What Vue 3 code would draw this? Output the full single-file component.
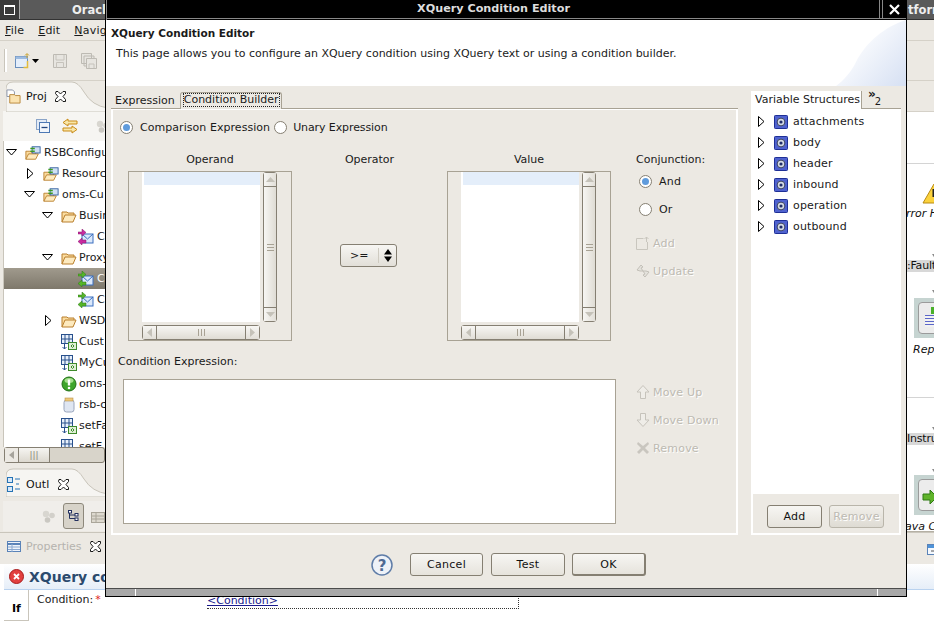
<script setup>
const menus = [['F', 'ile'], ['E', 'dit'], ['N', 'aviga']]
const tree = [
  { t: 'RSBConfigu', d: 0, a: 'open', i: 'proj' },
  { t: 'Resourc', d: 1, a: 'closed', i: 'proj' },
  { t: 'oms-Cu', d: 1, a: 'open', i: 'proj' },
  { t: 'Busin', d: 2, a: 'open', i: 'folder' },
  { t: 'C', d: 3, i: 'biz' },
  { t: 'Proxy', d: 2, a: 'open', i: 'folder' },
  { t: 'C', d: 3, i: 'proxy', sel: true },
  { t: 'C', d: 3, i: 'proxy' },
  { t: 'WSD', d: 2, a: 'closed', i: 'folder' },
  { t: 'Cust', d: 2, i: 'xf' },
  { t: 'MyCu', d: 2, i: 'xf' },
  { t: 'oms-', d: 2, i: 'ok' },
  { t: 'rsb-c', d: 2, i: 'jar' },
  { t: 'setFa', d: 2, i: 'xf' },
  { t: 'setF', d: 2, i: 'xf' }
]
const vars = ['attachments', 'body', 'header', 'inbound', 'operation', 'outbound']
</script>

<template>
  <div class="desk">
    <svg class="defs" width="0" height="0">
      <defs>
        <symbol id="folder" viewBox="0 0 16 16">
          <path d="M1 14V4h5l1 1h6v2" fill="#fbdc9f" stroke="#b97f2c"/>
          <path d="M1 14l3-7h11l-3 7z" fill="#fdeabf" stroke="#b97f2c"/>
        </symbol>
        <symbol id="proj" viewBox="0 0 18 16">
          <path d="M1 15V6h5l1 1h5v2" fill="#fbdc9f" stroke="#b97f2c"/>
          <path d="M1 15l3-6h11l-3 6z" fill="#fdeabf" stroke="#b97f2c"/>
          <rect x="8" y="1" width="9" height="7" fill="#cfe0f4" stroke="#2f5d9e"/>
          <path d="M6 3h5M6 6h5" stroke="#3c9a22" stroke-width="1.6"/>
        </symbol>
        <symbol id="proxy" viewBox="0 0 16 16">
          <rect x="4" y="5" width="11" height="9" fill="#dbe8fa" stroke="#3a6fbf"/>
          <path d="M4 5l5.500 5L15 5" fill="none" stroke="#3a6fbf"/>
          <path d="M0 3h4V0l4 3.500L4 7V5H0z" fill="#55b42a" stroke="#2e7a12" stroke-width=".5"/>
          <path d="M8 11H4V9l-4 3.500L4 16v-2h4z" fill="#55b42a" stroke="#2e7a12" stroke-width=".5"/>
        </symbol>
        <symbol id="biz" viewBox="0 0 16 16">
          <rect x="4" y="5" width="11" height="9" fill="#dbe8fa" stroke="#3a6fbf"/>
          <path d="M4 5l5.500 5L15 5" fill="none" stroke="#3a6fbf"/>
          <path d="M0 3h4V0l4 3.500L4 7V5H0z" fill="#c92ba0" stroke="#861a6a" stroke-width=".5"/>
          <path d="M8 11H4V9l-4 3.500L4 16v-2h4z" fill="#c92ba0" stroke="#861a6a" stroke-width=".5"/>
        </symbol>
        <symbol id="xf" viewBox="0 0 16 16">
          <rect x=".5" y=".5" width="11" height="9" fill="#e8f0fb" stroke="#28508c"/>
          <path d="M4 1v8M8 1v8M1 5h10" stroke="#28508c"/>
          <rect x="7.500" y="8.500" width="8" height="7" fill="#dff0d6" stroke="#3f8a2c"/>
          <path d="M10 12l1.500-1.500L13 12l-1.500 1.500z" fill="none" stroke="#3f8a2c"/>
          <path d="M3.500 10v5M1.500 13l2 2 2-2" fill="none" stroke="#28508c"/>
        </symbol>
        <symbol id="ok" viewBox="0 0 16 16">
          <circle cx="8" cy="8" r="7" fill="#3ea52b" stroke="#1f6e14"/>
          <ellipse cx="8" cy="4.500" rx="4.500" ry="2.500" fill="#a6e08e"/>
          <path d="M8 3.500v6" stroke="#fff" stroke-width="2.400"/>
          <circle cx="8" cy="12" r="1.300" fill="#fff"/>
        </symbol>
        <symbol id="jar" viewBox="0 0 16 16">
          <rect x="3" y="3" width="10" height="12" rx="2.500" fill="#dfe6f2" stroke="#9aa6bd"/>
          <rect x="4" y="1" width="8" height="3" fill="#eec97a" stroke="#b8914a" stroke-width=".6"/>
        </symbol>
        <symbol id="var" viewBox="0 0 14 14">
          <rect x=".5" y=".5" width="13" height="13" rx=".8" fill="#4f62cf" stroke="#1e2f96"/>
          <circle cx="7" cy="7" r="3.900" fill="#d5dbe6" stroke="#39415e"/>
          <circle cx="7" cy="7" r="1.600" fill="#1f2c6a"/>
        </symbol>
        <symbol id="closex" viewBox="0 0 11 11">
          <path d="M1 .5h2L5.500 3 8 .5h2.500v2L8 5.500l2.500 3v2H8L5.500 8 3 10.500H.5v-2L3 5.500.5 2.500z" fill="#fff" stroke="#000" stroke-width=".9"/>
        </symbol>
        <symbol id="balls" viewBox="0 0 13 13">
          <circle cx="4" cy="4" r="3.200" fill="#d8d6d0"/>
          <circle cx="10" cy="5.500" r="2.800" fill="#d2d0ca"/>
          <circle cx="5.500" cy="10" r="2.800" fill="#cac8c2"/>
        </symbol>
        <linearGradient id="swoosh" x1=".15" y1=".3" x2="1" y2="1">
          <stop offset="0" stop-color="#fff"/>
          <stop offset="1" stop-color="#d6e0f3"/>
        </linearGradient>
      </defs>
    </svg>

    <!-- window behind the dialog -->
    <div class="win">
      <div class="titlebar">
        <div class="winbtn"><span class="winsq"></span></div>
        <span class="wintitle">Oracl</span>
        <span class="wintitle2">tforn</span>
      </div>
      <div class="menubar">
        <span v-for="m in menus" :key="m[0]" class="menu"><u>{{ m[0] }}</u>{{ m[1] }}</span>
      </div>
      <div class="toolbar">
        <span class="grip"></span>
        <svg class="tb-new" width="16" height="16" viewBox="0 0 16 16">
          <rect x=".5" y="3.500" width="12" height="11" fill="#e4eefb" stroke="#6a8fbd"/>
          <rect x=".5" y="3.500" width="12" height="2.500" fill="#9dbbe0"/>
          <path d="M12.500 8v6.500h-4" fill="none" stroke="#e2bd3e" stroke-width="1.500"/>
          <path d="M12 5V1M10 2.500L12 .5l2 2" fill="none" stroke="#c9a22c"/>
        </svg>
        <svg class="tb-arrow" width="7" height="4"><path d="M0 0h7L3.500 4z" fill="#000"/></svg>
        <svg class="tb-save" width="16" height="16" viewBox="0 0 16 16">
          <path d="M1.500 1.500h13v13h-13z" fill="#e7e5e0" stroke="#bdbab3"/>
          <path d="M4 2v5h8V2M4.500 14.500v-5h7v5" fill="none" stroke="#c6c3bc"/>
        </svg>
        <svg class="tb-saveall" width="16" height="16" viewBox="0 0 16 16">
          <path d="M.5.500h10v10H.5zM3 3h10v10H3z" fill="#e7e5e0" stroke="#bdbab3"/>
          <path d="M5.500 5.500h10v10h-10z" fill="#e7e5e0" stroke="#bdbab3"/>
          <path d="M8 15v-4h5v4" fill="none" stroke="#c6c3bc"/>
        </svg>
      </div>

      <div class="work">
        <div class="leftcol">
          <section class="pane projpane">
            <div class="tabhead">
              <svg class="tabshape" width="102" height="31" viewBox="0 0 102 31">
                <path d="M0 31V8q0-7 7-7h59q6 0 12 10 8 14 24 16v4z" fill="#f6f5f2" stroke="#c9c5bb"/>
              </svg>
              <svg class="tabicon" width="15" height="15" viewBox="0 0 16 16">
                <path d="M1 1h6l2 2v5H1z" fill="#fff" stroke="#8a93a6"/>
                <path d="M4 15V6h5l1 1h5v8z" fill="#fbe3b0" stroke="#b8863a"/>
              </svg>
              <span class="tabtxt">Proj</span>
              <svg class="tabx" width="11" height="11"><use href="#closex"/></svg>
            </div>
            <div class="viewbar">
              <svg class="vb1" width="14" height="14" viewBox="0 0 14 14">
                <rect x=".5" y=".5" width="10" height="10" fill="#e3ebf6" stroke="#8aa4c8"/>
                <rect x="3.500" y="3.500" width="10" height="10" fill="#f2f6fb" stroke="#4c78b4"/>
                <path d="M5.500 8.500h6" stroke="#23467f" stroke-width="1.300"/>
              </svg>
              <svg class="vb2" width="16" height="16" viewBox="0 0 16 16">
                <path d="M6 1L1 4.500 6 8V6h9V3H6zM10 8l5 3.500-5 3.500v-2H1v-3h9z" fill="#f9e7a8" stroke="#c98b18"/>
              </svg>
              <span class="vbsep"></span>
              <svg class="vbgray" width="13" height="13"><use href="#balls"/></svg>
            </div>
            <div class="treebox">
              <div v-for="(r, idx) in tree" :key="idx" class="trow" :class="['d' + r.d, { sel: r.sel }]">
                <svg v-if="r.a === 'open'" class="tw" width="11" height="7"><path d="M.5.500h10L5.500 6z" fill="#fff" stroke="#000"/></svg>
                <svg v-else-if="r.a === 'closed'" class="tw" width="7" height="11"><path d="M.5.500v10L6 5.500z" fill="#fff" stroke="#000"/></svg>
                <span v-else class="tw"></span>
                <svg class="ticon" width="16" height="16"><use :href="'#' + r.i"/></svg>
                <span class="ttxt">{{ r.t }}</span>
              </div>
            </div>
            <div class="hscroll">
              <span class="hs-arrow"><svg width="5" height="8"><path d="M5 0v8L0 4z" fill="#a7a49c"/></svg></span>
              <span class="hs-thumb">|||</span>
            </div>
          </section>
          <section class="pane outline">
            <div class="tabhead short">
              <svg class="tabshape" width="102" height="29" viewBox="0 0 102 29">
                <path d="M0 29V8q0-7 7-7h59q6 0 12 10 8 13 24 15v3z" fill="#f6f5f2" stroke="#c9c5bb"/>
              </svg>
              <svg class="tabicon ol" width="14" height="15" viewBox="0 0 14 15">
                <rect x=".5" y=".5" width="5" height="5" fill="#d7e7f8" stroke="#2573b5"/>
                <rect x=".5" y="9.500" width="5" height="5" fill="#d7e7f8" stroke="#2573b5"/>
                <path d="M8 2h5M8 12h5M9 7h3" stroke="#2573b5" stroke-width="1.200"/>
              </svg>
              <span class="tabtxt">Outl</span>
              <svg class="tabx outx" width="11" height="11"><use href="#closex"/></svg>
            </div>
            <div class="olbar">
              <svg class="olgray" width="13" height="13"><use href="#balls"/></svg>
              <span class="olbtn">
                <svg width="11" height="12" viewBox="0 0 11 12"><path d="M1.500 2v6.500h6M1.500 5h6" fill="none" stroke="#23305f"/><rect x=".5" y=".5" width="3" height="2.500" fill="#fff" stroke="#23305f"/><rect x="7" y="3.500" width="3" height="2.500" fill="#fff" stroke="#23305f"/><rect x="7" y="8" width="3" height="2.500" fill="#fff" stroke="#23305f"/></svg>
              </span>
              <svg class="oltable" width="14" height="14" viewBox="0 0 14 14"><rect x=".5" y="3.500" width="13" height="10" fill="#ddd9cf" stroke="#aaa69a"/><path d="M1 7h13M1 10h13M5 4v10" stroke="#aaa69a"/></svg>
            </div>
          </section>
        </div>
        <div class="gap"></div>
        <div class="rightcol">
          <div class="rc-band"></div>
          <div class="canvas">
            <svg class="warnico" width="24" height="22" viewBox="0 0 24 22"><path d="M12 1L1 20h22z" fill="#fbd23c" stroke="#b88a14"/><path d="M12 6v8" stroke="#222" stroke-width="3"/></svg>
            <span class="cnote errh">rror H</span>
            <span class="canvas-line l1"></span>
            <span class="arrowd a1"></span>
            <span class="pill p1">:Fault</span>
            <span class="arrowd a2"></span>
            <div class="node n1">
              <div class="nodein">
                <span class="nflag"></span>
                <span class="nlines"></span>
              </div>
            </div>
            <span class="cnote rep">Rep.</span>
            <span class="canvas-line l2"></span>
            <span class="arrowd a3"></span>
            <span class="pill p2">Instru</span>
            <span class="arrowd a4"></span>
            <div class="node n2">
              <div class="nodein">
                <svg class="narrow" width="16" height="14" viewBox="0 0 16 14"><path d="M1 4h7V0l7 7-7 7v-4H1z" fill="#5fb32a" stroke="#2e7a12"/></svg>
              </div>
            </div>
            <span class="cnote jav">ava C</span>
          </div>
        </div>
      </div>

      <section class="props">
        <div class="proptab">
          <svg class="ptico" width="14" height="11" viewBox="0 0 14 11"><rect x=".5" y=".5" width="13" height="10" fill="#eef3fa" stroke="#5a83b8"/><path d="M1 3h12" stroke="#5a83b8" stroke-width="2"/><path d="M1 6h12M1 8.500h12M5 3v8" stroke="#8aa8cf"/></svg>
          <span class="pttxt">Properties</span>
          <svg class="tabx propx" width="11" height="11"><use href="#closex"/></svg>
          <svg class="rightmini" width="13" height="11" viewBox="0 0 13 11"><rect x=".5" y=".5" width="12" height="10" fill="#f4f8fd" stroke="#5a83b8"/><path d="M1 2.500h11" stroke="#4f93d8" stroke-width="3"/><path d="M4 7h5" stroke="#555"/></svg>
        </div>
        <div class="band">
          <svg class="errico" width="15" height="15" viewBox="0 0 15 15"><circle cx="7.500" cy="7.500" r="7" fill="#e2403f" stroke="#a81c1c"/><path d="M5 5l5 5M10 5l-5 5" stroke="#fff" stroke-width="1.800"/></svg>
          <span class="bandtxt">XQuery con</span>
        </div>
        <div class="propbody">
          <div class="iftab">If</div>
          <div class="condlab">Condition:<b>*</b></div>
          <div class="condfield"><span class="condlink">&lt;Condition&gt;</span></div>
        </div>
      </section>
    </div>

    <!-- modal dialog -->
    <div class="dlg">
      <div class="dlgtitle">
        <span class="dlgname">XQuery Condition Editor</span>
        <span class="dlgclose">
          <svg width="11" height="11" viewBox="0 0 11 11"><path d="M1 1l9 9M10 1l-9 9" stroke="#fff" stroke-width="2.200"/></svg>
        </span>
      </div>
      <div class="dlghead">
        <svg class="swoosh" width="70" height="66" viewBox="0 0 70 66"><path d="M70 0C50 6 30 22 20 42 15 52 8 60 0 66h70z" fill="url(#swoosh)"/></svg>
        <div class="h1">XQuery Condition Editor</div>
        <div class="h2">This page allows you to configure an XQuery condition using XQuery text or using a condition builder.</div>
      </div>
      <div class="dlgbody">
        <div class="main">
          <div class="tabs">
            <span class="tab">Expression</span>
            <span class="tab active"><span class="focus">Condition Builder</span></span>
          </div>
          <div class="panel">
            <div class="radios">
              <span class="radio on"></span><span class="rl1">Comparison Expression</span>
              <span class="radio"></span><span class="rl2">Unary Expression</span>
            </div>
            <div class="row2">
              <div class="col">
                <div class="collab">Operand</div>
                <div class="listbox">
                  <div class="list"><div class="selrow"></div></div>
                  <div class="vbar">
                    <span class="vb-btn"><svg width="9" height="5"><path d="M0 5h9L4.500 0z" fill="#c5c2b9"/></svg></span>
                    <span class="vb-thumb"><i></i><i></i><i></i></span>
                    <span class="vb-btn"><svg width="9" height="5"><path d="M0 0h9L4.500 5z" fill="#c5c2b9"/></svg></span>
                  </div>
                  <div class="hbar">
                    <span class="hb-btn"><svg width="5" height="9"><path d="M5 0v9L0 4.500z" fill="#c5c2b9"/></svg></span>
                    <span class="hb-thumb"><i></i><i></i><i></i></span>
                    <span class="hb-btn"><svg width="5" height="9"><path d="M0 0v9l5-4.500z" fill="#c5c2b9"/></svg></span>
                  </div>
                </div>
              </div>
              <div class="opcol">
                <div class="collab">Operator</div>
                <div class="opwrap">
                  <div class="select">
                    <span class="seltxt">&gt;=</span>
                    <span class="selsep"></span>
                    <svg width="8" height="13" viewBox="0 0 8 13"><path d="M0 5.500h8L4 0zM0 7.500h8L4 13z" fill="#000"/></svg>
                  </div>
                </div>
              </div>
              <div class="col">
                <div class="collab">Value</div>
                <div class="listbox">
                  <div class="list"><div class="selrow"></div></div>
                  <div class="vbar">
                    <span class="vb-btn"><svg width="9" height="5"><path d="M0 5h9L4.500 0z" fill="#c5c2b9"/></svg></span>
                    <span class="vb-thumb"><i></i><i></i><i></i></span>
                    <span class="vb-btn"><svg width="9" height="5"><path d="M0 0h9L4.500 5z" fill="#c5c2b9"/></svg></span>
                  </div>
                  <div class="hbar">
                    <span class="hb-btn"><svg width="5" height="9"><path d="M5 0v9L0 4.500z" fill="#c5c2b9"/></svg></span>
                    <span class="hb-thumb"><i></i><i></i><i></i></span>
                    <span class="hb-btn"><svg width="5" height="9"><path d="M0 0v9l5-4.500z" fill="#c5c2b9"/></svg></span>
                  </div>
                </div>
              </div>
              <div class="conj">
                <div class="conjlab">Conjunction:</div>
                <div class="act"><span class="radio on"></span><span class="conjopt">And</span></div>
                <div class="act"><span class="radio"></span><span class="conjopt">Or</span></div>
                <div class="act dis first">
                  <svg width="14" height="14" viewBox="0 0 14 14"><path d="M.5 2.500h7M.5 2.500v11h11V6" fill="none" stroke="#c9c6be"/><path d="M10.500 6V1M8.500 3l2-2 2 2" fill="none" stroke="#c9c6be"/></svg>
                  <span>Add</span>
                </div>
                <div class="act dis">
                  <svg width="14" height="14" viewBox="0 0 14 14"><path d="M1 6l4-5 2 2-2 1 2 3-3 0zM13 8l-4 5-2-2 2-1-2-3 3 0z" fill="#e4e2dc" stroke="#c3c0b8"/></svg>
                  <span>Update</span>
                </div>
              </div>
            </div>
            <div class="celab">Condition Expression:</div>
            <div class="row3">
              <div class="textarea"></div>
              <div class="mv">
                <div class="act dis">
                  <svg width="14" height="14" viewBox="0 0 14 14"><path d="M7 .5L13 7H9.500v6.500h-5V7H1z" fill="#efede8" stroke="#c6c3bb"/></svg>
                  <span>Move Up</span>
                </div>
                <div class="act dis">
                  <svg width="14" height="14" viewBox="0 0 14 14"><path d="M7 13.500L13 7H9.500V.5h-5V7H1z" fill="#efede8" stroke="#c6c3bb"/></svg>
                  <span>Move Down</span>
                </div>
                <div class="act dis">
                  <svg width="14" height="14" viewBox="0 0 14 14"><path d="M2 1l5 4 5-4 1 2-4 4 4 4-2 2-4-4-4 4-2-2 4-4-4-4z" fill="#c9c6bf"/></svg>
                  <span>Remove</span>
                </div>
              </div>
            </div>
          </div>
        </div>
        <div class="side">
          <div class="sidetabs">
            <span class="vtab">Variable Structures</span>
            <span class="more">»<sub>2</sub></span>
          </div>
          <div class="sidebody">
            <div class="vartree">
              <div v-for="v in vars" :key="v" class="vrow">
                <svg width="7" height="11"><path d="M.5.500v10L6 5.500z" fill="#fff" stroke="#000"/></svg>
                <svg class="vic" width="14" height="14"><use href="#var"/></svg>
                <span>{{ v }}</span>
              </div>
            </div>
            <div class="sidebtns">
              <button class="btn small">Add</button>
              <button class="btn small off">Remove</button>
            </div>
          </div>
        </div>
      </div>
      <div class="dlgfoot">
        <svg class="help" width="22" height="22" viewBox="0 0 22 22">
          <circle cx="11" cy="11" r="10" fill="#eef2f8" stroke="#5f7da8" stroke-width="1.500"/>
          <text x="11" y="16.500" text-anchor="middle" class="qm">?</text>
        </svg>
        <button class="btn fb">Cancel</button>
        <button class="btn fb">Test</button>
        <button class="btn fb def">OK</button>
      </div>
      <div class="status"><i></i><i class="n2b"></i></div>
    </div>
  </div>
</template>

<style>
html, body { margin: 0; padding: 0; background: #fff; }
</style>

<style scoped>
.desk {
  position: relative;
  width: 934px;
  height: 622px;
  overflow: hidden;
  background: #fff;
  font-family: "DejaVu Sans", sans-serif;
  font-size: 11px;
  color: #1a1a1a;
}
.defs { position: absolute; }
svg { display: block; flex: none; }

/* background window */
.win { width: 934px; height: 622px; display: flex; flex-direction: column; background: #ece9e3; }
.titlebar { height: 19px; flex: none; background: #5a5a5a; display: flex; align-items: center; color: #eee; font-weight: bold; font-size: 12px; border-bottom: 1px solid #333; overflow: hidden; }
.winbtn { width: 20px; height: 19px; flex: none; border-right: 1px solid #aaa; box-sizing: border-box; display: flex; align-items: center; justify-content: center; margin-right: 52px; background: #3a3a3a; }
.winsq { width: 9px; height: 7px; border: 1px solid #fff; border-top-width: 2px; }
.wintitle { width: 836px; flex: none; font-size: 11.500px; }
.wintitle2 { flex: none; font-size: 11.500px; }
.menubar { height: 21px; flex: none; display: flex; align-items: center; padding-left: 5px; gap: 14px; border-bottom: 1px solid #d5d1c8; box-sizing: border-box; }
.menu { letter-spacing: .2px; }
.toolbar { height: 40px; flex: none; display: flex; align-items: center; padding-left: 4px; box-sizing: border-box; border-bottom: 1px solid #d5d1c8; }
.grip { width: 2px; height: 23px; background: #fff; border-left: 1px solid #c9c5bb; margin-right: 8px; }
.tb-arrow { margin: 0 0 0 1px; }
.tb-save { margin-left: 13px; }
.tb-saveall { margin-left: 13px; }

.work { height: 451px; flex: none; display: flex; }
.leftcol { width: 105px; flex: none; display: flex; flex-direction: column; }
.gap { flex: 1; }
.rightcol { width: 27px; flex: none; display: flex; flex-direction: column; background: #fff; }
.rc-band { height: 30px; flex: none; background: #ece9e3; border-bottom: 1px solid #d5d1c8; }
.canvas { position: relative; flex: 1; background: #fff; border-bottom: 1px solid #b5b0a4; overflow: hidden; }
.canvas-line { position: absolute; left: 0; right: 0; height: 1px; background: #d4d4d4; }
.l1 { top: 51px; }
.l2 { top: 285px; }
.warnico { position: absolute; left: 15px; top: 71px; }
.cnote { position: absolute; font-style: italic; font-size: 11px; color: #111; white-space: nowrap; }
.errh { left: -1px; top: 95px; }
.rep { left: 6px; top: 231px; }
.jav { left: -2px; top: 408px; }
.pill { position: absolute; left: 0; right: 0; height: 12px; line-height: 12px; background: #d8d8d8; color: #111; white-space: nowrap; letter-spacing: -.2px; }
.p1 { top: 148px; }
.p2 { top: 321px; }
.arrowd { position: absolute; left: 25px; width: 0; height: 0; border: 3px solid transparent; border-top: 5px solid #8b8b8b; border-bottom: 0; }
.a1 { top: 142px; }
.a2 { top: 178px; }
.a3 { top: 315px; }
.a4 { top: 357px; }
.node { position: absolute; left: 7px; width: 27px; height: 40px; background: #c6d4d1; box-sizing: border-box; padding: 4px 0 4px 4px; }
.n1 { top: 186px; }
.n2 { top: 363px; }
.nodein { position: relative; height: 100%; border: 1px solid #9b9b9b; border-radius: 4px; background: #ececec; box-sizing: border-box; }
.nflag { position: absolute; left: 12px; top: 4px; width: 8px; height: 7px; background: #49b02a; }
.nlines { position: absolute; left: 6px; top: 12px; width: 20px; height: 12px; background: repeating-linear-gradient(#5b66c9 0 1px, #f2f2f2 1px 3px); }
.narrow { position: absolute; left: 3px; top: 10px; }

.pane { box-sizing: border-box; padding-left: 3px; }
.projpane { height: 387px; display: flex; flex-direction: column; }
.tabhead { position: relative; height: 30px; display: flex; align-items: center; flex: none; }
.tabhead.short { height: 33px; }
.tabshape { position: absolute; left: 3px; top: 0; }
.tabicon { position: relative; margin-left: 3px; }
.tabicon.ol { margin-left: 4px; }
.tabtxt { position: relative; margin-left: 5px; font-size: 11px; color: #111; letter-spacing: .1px; }
.tabx { position: relative; margin-left: 8px; }
.outx { margin-left: 9px; }
.viewbar { height: 30px; flex: none; background: #f6f5f2; display: flex; align-items: center; padding-left: 33px; }
.vb2 { margin-left: 12px; }
.vbsep { width: 1px; height: 20px; background: #d5d1c8; margin-left: 7px; }
.vbgray { margin-left: 11px; }
.treebox { flex: 1; background: #fff; overflow: hidden; padding-top: 1px; border-left: 1px solid #c9c5bb; }
.trow { height: 21px; display: flex; align-items: center; white-space: nowrap; position: relative; }
.trow.sel { background: linear-gradient(#a09a8d, #7e786b); color: #fff; margin-left: 0; }
.d0 { padding-left: 2px; }
.d1 { padding-left: 20px; }
.d2 { padding-left: 38px; }
.d3 { padding-left: 57px; }
.d2 .ticon { margin-right: 2px; }
.tw { width: 11px; flex: none; margin-right: 8px; }
svg.tw[width="7"] { width: 7px; margin-right: 9px; margin-left: 3px; }
.ticon { margin-right: 3px; }
.d3 .tw { width: 9px; margin-right: 8px; }
.hscroll { height: 16px; flex: none; background: #d8d4ca; display: flex; margin-left: 1px; margin-bottom: 5px; border-radius: 3px; box-sizing: border-box; border: 1px solid #857f72; }
.hs-arrow { width: 13px; background: #ece9e3; display: flex; align-items: center; justify-content: center; border-right: 1px solid #857f72; }
.hs-thumb { width: 30px; background: linear-gradient(#f6f5f2, #dcd8cf); color: #8a8578; text-align: center; border-right: 1px solid #857f72; font-size: 9px; line-height: 14px; }
.outline { height: 64px; flex: none; background: #ece9e3; }
.olbar { display: flex; align-items: center; height: 30px; padding-left: 39px; background: #f0eeea; }
.olgray { margin-right: 8px; }
.olbtn { width: 25px; height: 26px; box-sizing: border-box; background: #d7d3c9; border: 1px solid #8d887b; border-radius: 3px; display: flex; align-items: center; justify-content: center; }
.oltable { margin-left: 7px; }

.props { flex: 1; background: #fff; position: relative; display: flex; flex-direction: column; }
.proptab { height: 32px; flex: none; display: flex; align-items: center; padding: 0 0 4px 7px; background: #ece9e3; border-top: 1px solid #c9c5bb; box-sizing: border-box; position: relative; }
.pttxt { margin-left: 5px; color: #b5b3ae; font-size: 11px; }
.propx { margin-left: 8px; }
.rightmini { position: absolute; left: 927px; top: 11px; }
.band { height: 26px; flex: none; background: linear-gradient(#fff, #e6eef8); border-bottom: 1px solid #b9d2ef; margin-left: 4px; display: flex; align-items: center; padding-left: 5px; box-sizing: border-box; }
.errico { margin-right: 5px; }
.bandtxt { font-size: 14px; font-weight: bold; color: #2b4a6e; }
.propbody { flex: 1; display: flex; position: relative; padding-left: 4px; }
.iftab { width: 25px; height: 31px; box-sizing: border-box; padding: 12px 0 0 8px; font-weight: bold; border-right: 1px solid #c9c5bb; border-bottom: 1px solid #c9c5bb; color: #000; }
.condlab { margin-left: 8px; margin-top: 3px; }
.condlab b { color: #e02020; font-weight: normal; margin-left: 2px; }
.condfield { position: absolute; left: 207px; top: 0; width: 312px; height: 19px; box-sizing: border-box; border-right: 1px dotted #333; border-bottom: 1px dotted #333; padding-top: 4px; }
.condlink { color: #1a1a8c; text-decoration: underline; }

/* dialog */
.dlg { position: absolute; left: 105px; top: 0; width: 802px; height: 597px; box-sizing: border-box; border: 1px solid #000; border-top: 0; background: #ece9e3; display: flex; flex-direction: column; }
.dlgtitle { height: 20px; flex: none; background: #000; box-sizing: border-box; display: flex; justify-content: center; position: relative; color: #ddd; font-weight: bold; font-size: 11.200px; line-height: 17px; border-left: 1px solid #888; padding-right: 26px; }
.dlgtitle::after { content: ""; position: absolute; left: 0; right: 0; top: 18px; height: 1px; background: #888; }
.dlgclose { position: absolute; right: 0; top: 0; width: 23px; height: 18px; border-left: 1px solid #888; box-shadow: -2px 0 0 #000, -3px 0 0 #888; display: flex; align-items: center; justify-content: center; }
.dlghead { position: relative; height: 66px; flex: none; box-sizing: border-box; padding: 6px 0 0 5px; background: #fff; }
.swoosh { position: absolute; right: 0; top: 0; }
.h1 { position: relative; font-weight: bold; font-size: 10.500px; line-height: 14px; }
.h2 { position: relative; margin: 7px 0 0 5px; line-height: 14px; }
.dlgbody { height: 449px; flex: none; display: flex; padding-left: 5px; }
.main { width: 627px; flex: none; display: flex; flex-direction: column; }
.tabs { height: 23px; flex: none; display: flex; align-items: flex-end; border-bottom: 1px solid #a8a294; box-sizing: border-box; }
.tab { height: 17px; line-height: 20px; padding: 0 5px 0 4px; box-sizing: border-box; }
.tab.active { height: 17px; line-height: 14px; margin-bottom: -1px; padding: 0 1px 0 2px; background: #ece9e3; border: 1px solid #a8a294; border-bottom: 0; border-radius: 3px 3px 0 0; position: relative; }
.focus { display: block; outline: 1px dotted #222; outline-offset: -1px; line-height: 14px; padding: 0 1px; }
.panel { flex: 1; border-left: 2px solid #fff; border-bottom: 2px solid #fff; border-right: 2px solid #fff; border-top: 1px solid #fff; box-sizing: border-box; display: flex; flex-direction: column; }
.radios { display: flex; align-items: center; height: 16px; margin-top: 9px; padding-left: 7px; flex: none; }
.radio { width: 13px; height: 13px; box-sizing: border-box; border-radius: 50%; border: 1px solid #857f72; background: #fff; flex: none; position: relative; }
.radio.on::after { content: ""; position: absolute; left: 2px; top: 2px; width: 7px; height: 7px; border-radius: 50%; background: #5f9bdc; }
.rl1 { margin-left: 7px; margin-right: 4px; letter-spacing: .05px; }
.rl2 { margin-left: 6px; letter-spacing: -.1px; }
.row2 { display: flex; margin-top: 18px; padding-left: 15px; flex: none; }
.col { width: 164px; flex: none; }
.collab { height: 14px; line-height: 14px; text-align: center; margin-bottom: 4px; }
.listbox { position: relative; height: 170px; box-sizing: border-box; border: 1px solid #a8a294; }
.list { position: absolute; left: 13px; top: 0; width: 118px; height: 150px; background: #fff; }
.selrow { height: 13px; margin-left: 2px; background: #e4eefa; }
.vbar { position: absolute; left: 134px; top: 0; width: 14px; height: 150px; box-sizing: border-box; border: 1px solid #857f72; border-radius: 3px; display: flex; flex-direction: column; background: #f1efea; }
.vb-btn { height: 13px; flex: none; display: flex; align-items: center; justify-content: center; background: linear-gradient(90deg, #f7f6f3, #e2dfd8); }
.vb-thumb { flex: 1; display: flex; flex-direction: column; align-items: center; justify-content: center; gap: 2px; border-top: 1px solid #857f72; border-bottom: 1px solid #857f72; background: linear-gradient(90deg, #f7f6f3, #dfdcd4); }
.vb-thumb i { width: 7px; height: 1px; background: #a8a294; }
.hbar { position: absolute; left: 13px; top: 153px; width: 118px; height: 15px; box-sizing: border-box; border: 1px solid #857f72; border-radius: 3px; display: flex; background: #f1efea; }
.hb-btn { width: 13px; flex: none; display: flex; align-items: center; justify-content: center; background: linear-gradient(#f7f6f3, #e2dfd8); }
.hb-thumb { flex: 1; display: flex; align-items: center; justify-content: center; gap: 2px; border-left: 1px solid #857f72; border-right: 1px solid #857f72; background: linear-gradient(#f7f6f3, #dfdcd4); }
.hb-thumb i { width: 1px; height: 7px; background: #a8a294; }
.opcol { width: 155px; flex: none; display: flex; flex-direction: column; }
.opwrap { flex: 1; display: flex; justify-content: flex-start; align-items: center; padding: 0 0 2px 48px; }
.select { width: 57px; height: 23px; box-sizing: border-box; border: 1px solid #857f72; border-radius: 3px; background: linear-gradient(#f7f6f3, #e2dfd8); display: flex; align-items: center; padding: 0 3px 0 9px; }
.seltxt { width: 28px; flex: none; }
.selsep { width: 1px; height: 15px; background: #cfcbc1; margin-right: 5px; }
.conj { margin-left: 25px; flex: none; }
.conjlab { height: 14px; line-height: 14px; }
.act { height: 28px; display: flex; align-items: center; gap: 3px; white-space: nowrap; letter-spacing: .2px; }
.act .radio { margin: 0 0 0 3px; }
.conjopt { margin-left: 4px; }
.act.first { margin-top: 6px; }
.act.dis { color: #bdbab2; text-shadow: 1px 1px 0 #fff; }
.celab { margin: 14px 0 0 5px; line-height: 14px; height: 14px; flex: none; }
.row3 { display: flex; margin-top: 10px; padding-left: 10px; }
.textarea { width: 493px; height: 145px; background: #fff; box-sizing: border-box; border: 1px solid #a8a294; flex: none; }
.mv { margin: -1px 0 0 20px; }
.side { width: 150px; flex: none; margin-left: 13px; display: flex; flex-direction: column; }
.sidetabs { height: 23px; flex: none; display: flex; align-items: flex-end; border-bottom: 1px solid #a8a294; box-sizing: border-box; }
.vtab { height: 18px; line-height: 18px; width: 111px; box-sizing: border-box; padding-left: 4px; background: #fff; margin-bottom: -1px; border-right: 1px solid #a8a294; position: relative; white-space: nowrap; }
.more { height: 18px; margin-left: 6px; line-height: 9px; font-size: 12px; font-weight: bold; }
.more sub { position: relative; top: 7px; left: -1px; font-size: 10px; font-weight: normal; line-height: 0; vertical-align: baseline; }
.sidebody { height: 426px; background: #fff; display: flex; flex-direction: column; border-bottom: 2px solid #fff; box-sizing: border-box; }
.vartree { height: 385px; flex: none; padding-top: 2px; box-sizing: border-box; }
.vrow { height: 21px; display: flex; align-items: center; padding-left: 7px; letter-spacing: .15px; }
.vic { margin: 0 5px 0 9px; }
.sidebtns { flex: 1; margin: 0 2px; background: #ece9e3; display: flex; align-items: center; padding: 5px 0 0 14px; gap: 7px; }
.btn { font: inherit; letter-spacing: .3px; color: #111; height: 23px; box-sizing: border-box; padding: 0; border: 1px solid #857f72; border-radius: 3px; background: linear-gradient(#f7f6f3, #e6e3dc); }
.small { width: 55px; }
.small.off { color: #bdbab2; border-color: #b9b5aa; text-shadow: 1px 1px 0 #fff; background: linear-gradient(#f1efea, #dedbd3); }
.dlgfoot { height: 53px; flex: none; display: flex; align-items: center; padding: 6px 0 0 265px; box-sizing: border-box; }
.help { margin-right: 17px; }
.qm { font-family: "DejaVu Sans", sans-serif; font-weight: bold; font-size: 15px; fill: #4f6a94; }
.fb { width: 73px; margin-right: 8px; }
.fb + .fb { width: 74px; }
.fb.def { margin-left: -1px; border-width: 1px 2px 2px 1px; border-color: #857f72; }
.status { height: 7px; flex: none; background: #a8a8a8; border-top: 1px solid #4c4c4c; display: flex; justify-content: space-between; padding: 0 28px 0 29px; }
.status i { width: 1px; background: #fff; }
</style>
